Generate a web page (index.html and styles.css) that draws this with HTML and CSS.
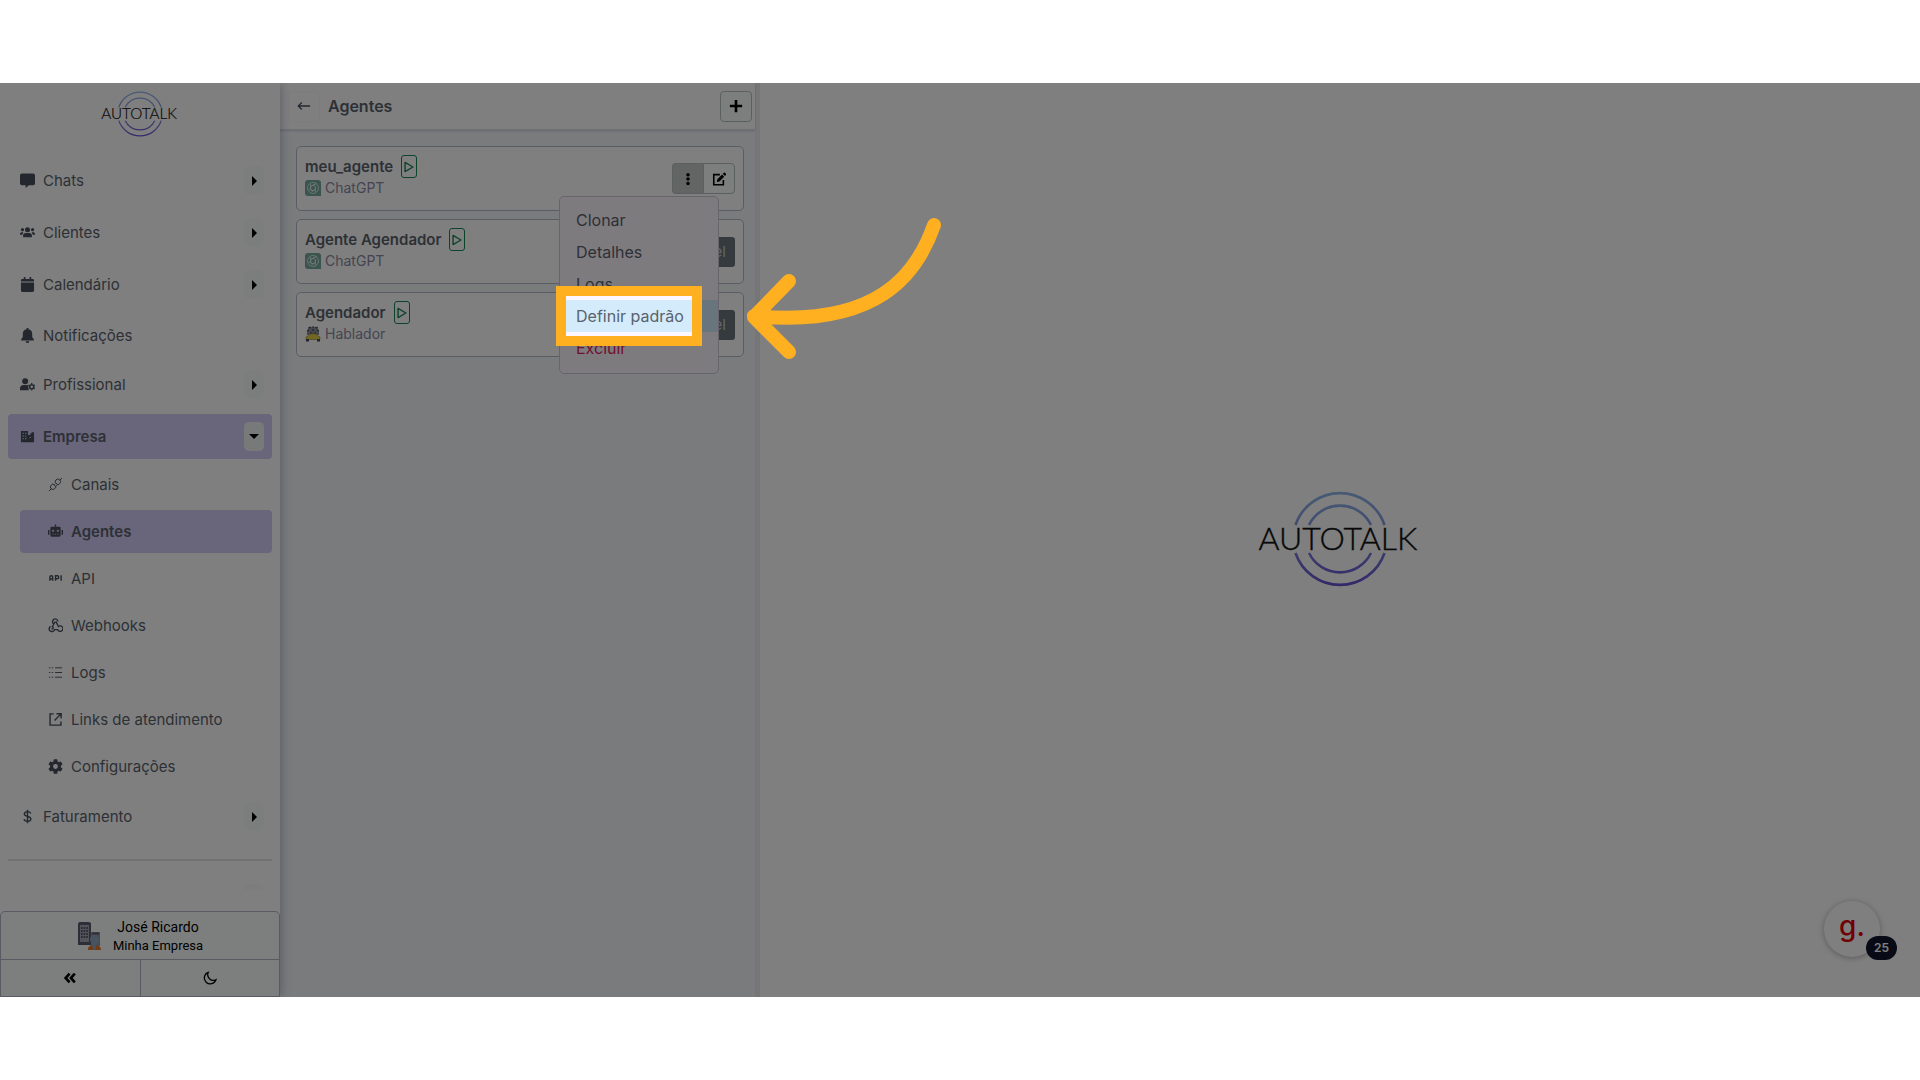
FILE: index.html
```html
<!DOCTYPE html>
<html lang="pt-BR">
<head>
    <meta charset="UTF-8">
    <meta name="viewport" content="width=device-width, initial-scale=1.0">
    <title>Autotalk - Agentes</title>
    <link rel="stylesheet" href="styles.css">
</head>
<body>
    <svg class="sprite" aria-hidden="true">
        <defs>
            <linearGradient id="ring" x1="0" y1="0" x2="0" y2="96" gradientUnits="userSpaceOnUse">
                <stop offset="0" stop-color="#8fb8e8"/>
                <stop offset="0.5" stop-color="#8089dc"/>
                <stop offset="1" stop-color="#6450d2"/>
            </linearGradient>
        </defs>
        <symbol id="logo" viewBox="0 0 168 96">
            <g fill="none" stroke="url(#ring)" stroke-width="2.6">
                <path d="M39.500 34A47 47 0 0 1 128.500 34M53 34A34.500 34.500 0 0 1 115 34"/>
                <path d="M39.500 62A47 47 0 0 0 128.500 62M53 62A34.500 34.500 0 0 0 115 62"/>
            </g>
            <text x="82" y="59" text-anchor="middle" class="logo-text">AUTOTALK</text>
        </symbol>
        <symbol id="openai" viewBox="0 0 16 16">
            <path d="M3 0h10a3 3 0 0 1 3 3v13H3a3 3 0 0 1-3-3V3a3 3 0 0 1 3-3z" fill="#74aa9c"/>
            <g fill="none" stroke="#e6f2ee" stroke-width="0.8">
                <circle cx="8" cy="8" r="5.500"/>
                <path d="M8 5.200l2.400 1.400v2.800L8 10.800 5.600 9.400V6.600zM8 5.200l4-2M10.400 6.600v6M10.400 9.400l-4 2.600M8 10.800L3.500 9M5.600 9.400V4M5.600 6.600L10 4.200"/>
            </g>
        </symbol>
        <symbol id="play" viewBox="0 0 16 16">
            <path d="M3.500 2.800v10.400L12.500 8z" fill="none" stroke="currentColor" stroke-width="1.600" stroke-linejoin="round"/>
        </symbol>
    </svg>

    <div class="app">
        <aside class="sidebar">
            <a href="#" class="brand" aria-label="Autotalk"><svg><use href="#logo"/></svg></a>

            <nav class="menu">
                <div class="menu-item">
                    <a href="#"><svg viewBox="0 0 16 16"><path d="M2 0.500h12a2 2 0 0 1 2 2v8.500a2 2 0 0 1-2 2H9.500L6 16v-3H2a2 2 0 0 1-2-2V2.500a2 2 0 0 1 2-2z"/></svg>Chats</a>
                    <button class="toggle" aria-label="Abrir Chats"></button>
                </div>
                <div class="menu-item">
                    <a href="#"><svg viewBox="0 0 16 16"><circle cx="8" cy="5" r="2.700"/><circle cx="2.600" cy="5" r="1.700"/><circle cx="13.400" cy="5" r="1.700"/><path d="M3.300 13v-1.500a3 3 0 0 1 3-3h3.400a3 3 0 0 1 3 3V13zM0 10.500V9.300a1.700 1.700 0 0 1 1.700-1.700H3.500L2.500 10.500zM16 10.500V9.300a1.700 1.700 0 0 0-1.700-1.700H12.500l1 2.900z"/></svg>Clientes</a>
                    <button class="toggle" aria-label="Abrir Clientes"></button>
                </div>
                <div class="menu-item">
                    <a href="#"><svg viewBox="0 0 16 16"><path d="M4 0h1.800v2h4.400V0H12v2h1.500A1.500 1.500 0 0 1 15 3.500V4.800H1V3.500A1.500 1.500 0 0 1 2.500 2H4zM1 5.800h14v8.700a1.500 1.500 0 0 1-1.500 1.500h-11A1.500 1.500 0 0 1 1 14.500z"/></svg>Calendário</a>
                    <button class="toggle" aria-label="Abrir Calendário"></button>
                </div>
                <div class="menu-item plain">
                    <a href="#"><svg viewBox="0 0 16 16"><path d="M7 0h2v1.200A5 5 0 0 1 13 6v2.500c0 1.500.8 2.500 1.800 3.500v1.200H1.200V12C2.200 11 3 10 3 8.500V6a5 5 0 0 1 4-4.800zM6 14h4a2 2 0 0 1-4 0z"/></svg>Notificações</a>
                </div>
                <div class="menu-item">
                    <a href="#"><svg viewBox="0 0 16 16"><circle cx="5.500" cy="4.500" r="3.200"/><path d="M0 14v-1.500a4 4 0 0 1 4-4h3c.9 0 1.700.2 2.300.7A4 4 0 0 0 9.500 14z"/><circle cx="12.500" cy="10.500" r="2.200" fill="none" stroke="currentColor" stroke-width="1.600"/><path fill="none" stroke="currentColor" stroke-width="1.400" d="M12.500 7.500v-1M12.500 14.500v-1M9.900 9l-.8-.5M15.900 12.500l-.8-.5M9.900 12l-.8.5M15.900 8.500l-.8.5"/></svg>Profissional</a>
                    <button class="toggle" aria-label="Abrir Profissional"></button>
                </div>
                <div class="menu-item active">
                    <a href="#"><svg viewBox="0 0 16 16"><path fill-rule="evenodd" d="M1 2h7.500v4.500H11V4.500h1.500v-1H15V14H1zM2.800 4v1.400h1.200V4zM5.500 4v1.400h1.200V4zM2.800 6.800v1.400h1.200V6.800zM5.500 6.800v1.400h1.200V6.800zM2.800 9.600V11h1.200V9.600zM5.500 9.600V11h1.200V9.600zM10.300 8.500v1.200h1.200V8.500z"/></svg>Empresa</a>
                    <button class="toggle open" aria-label="Fechar Empresa"></button>
                </div>

                <div class="submenu">
                    <a href="#"><svg viewBox="0 0 16 16" class="line"><path d="M1 15l2.500-2.500M12.500 3.500L15 1M7.500 5.500l3 3 2-1.500a2.800 2.800 0 0 0-4-4zM5.300 7.300l3.400 3.400-1.700 1.800a2.600 2.600 0 0 1-3.700-3.700zM6.800 8.200L8 7M8.300 9.700L9.500 8.500"/></svg>Canais</a>
                    <a href="#" class="active"><svg viewBox="0 0 16 16"><path fill-rule="evenodd" d="M7.300 0.500h1.400V3H12a1.500 1.500 0 0 1 1.500 1.500V12a1.500 1.500 0 0 1-1.500 1.500H4A1.500 1.500 0 0 1 2.500 12V4.500A1.500 1.500 0 0 1 4 3h3.300zM5.500 6a1.200 1.200 0 1 0 0 2.400 1.200 1.200 0 0 0 0-2.400zM10.500 6a1.200 1.200 0 1 0 0 2.400 1.200 1.200 0 0 0 0-2.400zM4.800 10.300v1h1.400v-1zM7.300 10.300v1h1.400v-1zM9.800 10.300v1h1.400v-1zM0 6.500h1.500v5H0zM14.500 6.500H16v5h-1.500z"/></svg>Agentes</a>
                    <a href="#"><svg viewBox="0 0 16 16" class="line bold"><path d="M2 10.500V6.500a1.500 1.500 0 0 1 3 0v4M2 8.500h3M8 10.500V5h1.800a1.600 1.600 0 0 1 0 3.300H8M14 4.500v6"/></svg>API</a>
                    <a href="#"><svg viewBox="1 1 22 22" class="line wide"><path d="M4.900 13.400a4 4 0 1 0 5.600 4.600H16M9.600 9.800a4 4 0 1 1 6-3.600M15 17.500a4 4 0 1 0 1.300-4L12.500 6M11.500 6.500L7.500 13.500a1.800 1.800 0 1 1-1.500 3.500"/></svg>Webhooks</a>
                    <a href="#"><svg viewBox="0 0 16 16" class="line"><path d="M1 3h1.500M1 8h1.500M1 13h1.500M4 3h1.500M4 8h1.500M4 13h1.500M7.500 3H15M7.500 8H15M7.500 13H15"/></svg>Logs</a>
                    <a href="#"><svg viewBox="0 0 16 16" class="line bold"><path d="M6 2H2.200v12h11.600V10M9 1.800h5v5M13.800 2L7 9"/></svg>Links de atendimento</a>
                    <a href="#"><svg viewBox="2 2 20 20"><path d="M19.140 12.940c.04-.3.06-.61.06-.94s-.02-.64-.07-.94l2.030-1.580a.49.49 0 0 0 .12-.61l-1.920-3.320a.49.49 0 0 0-.59-.22l-2.390.96a7 7 0 0 0-1.620-.94L14.400 2.810A.48.48 0 0 0 13.920 2.400h-3.840a.48.48 0 0 0-.47.410L9.250 5.350a7 7 0 0 0-1.620.94l-2.390-.96a.48.48 0 0 0-.59.220L2.740 8.870a.48.48 0 0 0 .12.610l2.030 1.580c-.05.3-.09.63-.09.940s.02.640.07.940l-2.030 1.580a.49.49 0 0 0-.12.610l1.920 3.320c.12.220.37.290.59.220l2.390-.96c.5.380 1.030.7 1.620.940l.36 2.540c.05.240.24.410.48.410h3.840c.24 0 .44-.17.470-.41l.36-2.540a7 7 0 0 0 1.620-.94l2.390.96c.22.080.47 0 .59-.22l1.920-3.320a.47.47 0 0 0-.12-.61zM12 15.200a3.200 3.200 0 1 1 0-6.400 3.200 3.200 0 0 1 0 6.400z"/></svg>Configurações</a>
                </div>

                <div class="menu-item">
                    <a href="#"><svg viewBox="0 0 16 16" class="line bold"><path d="M11.500 4.800C11 3.400 9.700 2.800 8 2.800c-2 0-3.400.9-3.400 2.500C4.600 8.700 11.600 7 11.600 10.700c0 1.600-1.500 2.500-3.600 2.500-2 0-3.300-.9-3.700-2.400M8 .8v14.400"/></svg>Faturamento</a>
                    <button class="toggle" aria-label="Abrir Faturamento"></button>
                </div>
                <hr>
                <div class="menu-item">
                    <button class="toggle" aria-label="Abrir mais"></button>
                </div>
            </nav>

            <footer class="account">
                <button class="profile">
                    <svg viewBox="0 0 24 30">
                        <path d="M2 1h10l2 1v22H1V3z" fill="#5b5d70"/>
                        <path d="M3 4h9v17H3z" fill="#a5a8b8"/>
                        <path d="M4 7h7M4 10h7M4 13h7M4 16h7" stroke="#3c3e54" stroke-width="1.600" stroke-dasharray="1.700 0.900"/>
                        <path d="M14 11h9v14h-9z" fill="#9599a6"/>
                        <path d="M15 12.500h7" stroke="#5b5d70" stroke-width="2"/>
                        <path d="M11 29c0-4 2.500-5 6-5s7 1 7 5z" fill="#e87520"/>
                        <path d="M13 18.500c0-3 1.700-4.500 4-4.500s5 1.500 5 4.500c0 2-1.500 3-2 4.500l-2 6h-2l-1-6c-1-1.500-2-2.500-2-4.500z" fill="#8fa7bf"/>
                    </svg>
                    <span>José Ricardo<small>Minha Empresa</small></span>
                </button>
                <div class="account-actions">
                    <button aria-label="Recolher menu"><svg viewBox="0 0 16 16" class="line heavy"><path d="M7.500 3L3 8l4.500 5M13.500 3L9 8l4.500 5"/></svg></button>
                    <button aria-label="Modo escuro"><svg viewBox="0 0 16 16" class="line bold"><path d="M6 1.500A6.800 6.800 0 1 0 14.800 10 6.500 6.500 0 0 1 6 1.500z"/></svg></button>
                </div>
            </footer>
        </aside>

        <section class="panel">
            <header class="panel-header">
                <button class="btn-back" aria-label="Voltar"><svg viewBox="0 0 16 16" class="line bold"><path d="M15 8H1.500M5.500 4l-4 4 4 4"/></svg></button>
                <h1>Agentes</h1>
                <button class="btn-add" aria-label="Adicionar"><svg viewBox="0 0 16 16" class="line heavy"><path d="M8 1v14M1 8h14"/></svg></button>
            </header>

            <div class="agents">
                <article class="card">
                    <div class="card-info">
                        <h2>meu_agente <button class="btn-play" aria-label="Testar meu_agente"><svg><use href="#play"/></svg></button></h2>
                        <p><svg><use href="#openai"/></svg>ChatGPT</p>
                    </div>
                    <div class="btn-group">
                        <button class="pressed" aria-label="Mais opções"><svg viewBox="0 0 16 16"><circle cx="8" cy="3" r="2"/><circle cx="8" cy="8" r="2"/><circle cx="8" cy="13" r="2"/></svg></button>
                        <button aria-label="Editar"><svg viewBox="0 0 16 16"><path d="M9 3H2v11.500h11V9" fill="none" stroke="currentColor" stroke-width="1.800"/><path d="M5.500 11.500l.6-3.200L11.500 2.900l2.400 2.400-5.400 5.500zM12.300 2.100l1.200-1.200a1 1 0 0 1 1.300 0l1.100 1.100a1 1 0 0 1 0 1.300l-1.200 1.200z"/></svg></button>
                    </div>

                    <div class="dropdown">
                        <a href="#">Clonar</a>
                        <a href="#">Detalhes</a>
                        <a href="#">Logs</a>
                        <a href="#" class="hover">Definir padrão
                            <span class="spotlight">
                                <svg class="arrow" viewBox="0 0 200 150"><path d="M186 15C169 64 130 118 6 106M41 71L6 107L41 142"/></svg>
                            </span>
                        </a>
                        <a href="#" class="danger">Excluir</a>
                    </div>
                </article>

                <article class="card">
                    <div class="card-info">
                        <h2>Agente Agendador <button class="btn-play" aria-label="Testar Agente Agendador"><svg><use href="#play"/></svg></button></h2>
                        <p><svg><use href="#openai"/></svg>ChatGPT</p>
                    </div>
                    <button class="btn-status">Disponível</button>
                </article>

                <article class="card">
                    <div class="card-info">
                        <h2>Agendador <button class="btn-play" aria-label="Testar Agendador"><svg><use href="#play"/></svg></button></h2>
                        <p><svg viewBox="0 0 16 16">
                            <path d="M3 1h10v3h1v5H2V4h1z" fill="#8e8e9c"/>
                            <path d="M4 1.500h2M7.500 1h1.500M10.500 1.500h2M2 4.500h2M7 4h2M12 4.500h2M5 7h1.500M9.500 7H11" stroke="#4c4c58" stroke-width="1.300"/>
                            <path d="M1 13.500V11l2-1 1.500-2h7L13 10l2 1v2.500z" fill="#e5cf43" stroke="#8b8648" stroke-width="0.600"/>
                            <path d="M1 13v2.500h3V13M12 13v2.500h3V13" fill="#4a4c58"/>
                        </svg>Hablador</p>
                    </div>
                    <button class="btn-status">Disponível</button>
                </article>
            </div>
        </section>

        <main class="content">
            <svg class="content-logo" role="img" aria-label="Autotalk"><use href="#logo"/></svg>
            <button class="help" aria-label="Ajuda">g.<span class="badge">25</span></button>
        </main>
    </div>
</body>
</html>
```

FILE: styles.css
```css
* {
    margin: 0;
    padding: 0;
    box-sizing: border-box;
}

body {
    font-family: Inter, 'Liberation Sans', sans-serif;
    font-size: 15px;
    color: #5a626c;
    background: #fff;
    height: 100vh;
    padding: 83px 0;
}

a {
    color: inherit;
    text-decoration: none;
}

button {
    font: inherit;
    color: #000;
    background: #f8fffc;
    border: 1px solid #b4bec4;
    cursor: pointer;
}

svg {
    width: 16px;
    height: 16px;
    fill: currentColor;
    flex-shrink: 0;
}

.sprite {
    position: absolute;
    width: 0;
    height: 0;
}

.line {
    fill: none;
    stroke: currentColor;
    stroke-width: 1px;
}

.bold {
    stroke-width: 1.5px;
}

.wide {
    stroke-width: 2px;
}

.heavy {
    stroke-width: 3px;
}

.logo-text {
    font-family: Lato, sans-serif;
    font-size: 32px;
    font-weight: 300;
    fill: #111;
    stroke: #111;
    stroke-width: 0.4px;
}

.app {
    position: relative;
    display: flex;
    height: 100%;
    overflow: hidden;
    background: #fff;
}

/* Menu lateral */
.sidebar {
    position: relative;
    display: flex;
    flex-direction: column;
    width: 280px;
    background: #fff;
    box-shadow: 0 0 10px rgba(60, 60, 110, 0.4);
}

.brand {
    display: flex;
    justify-content: center;
    padding: 8px 0 21px;
}

.brand svg {
    width: 80px;
    height: 46px;
}

.menu {
    flex: 1;
    overflow: hidden;
    padding: 0 8px;
    min-height: 0;
    margin-bottom: 21px;
}

.menu-item {
    display: flex;
    align-items: center;
    justify-content: flex-end;
    height: 45px;
    margin-bottom: 7px;
    padding: 0 8px 0 12px;
    border-radius: 4px;
}

.menu-item a {
    display: flex;
    flex: 1;
    align-items: center;
    gap: 8px;
}

.menu-item.plain {
    height: 43px;
    margin-bottom: 5px;
}

.menu-item svg,
.submenu svg {
    width: 15px;
    height: 15px;
    color: #48505c;
}

.menu .active {
    background: #d2ccf8;
    font-weight: 600;
}

.toggle {
    display: flex;
    align-items: center;
    justify-content: center;
    width: 20px;
    height: 29px;
    background: #f9fdfc;
    border: none;
    border-radius: 5px;
}

.toggle::before {
    content: '';
    border: 5px solid transparent;
    border-left-color: #000;
    border-right-width: 0;
}

.toggle.open {
    background: #f1f5f4;
}

.toggle.open::before {
    border: 5px solid transparent;
    border-top-color: #000;
    border-bottom-width: 0;
}

.submenu {
    display: flex;
    flex-direction: column;
    gap: 4px;
    padding: 0 0 6px 12px;
    margin-top: -3px;
}

.submenu a {
    display: flex;
    align-items: center;
    gap: 8px;
    height: 43px;
    padding-left: 28px;
    border-radius: 4px;
}

hr {
    border: none;
    border-top: 2px solid #e3e3e8;
    margin: 20px 0 15px;
}

.account {
    border: 1px solid #b5b5c4;
    border-radius: 5px 5px 0 0;
    background: #fafffd;
}

.profile {
    display: flex;
    align-items: center;
    justify-content: center;
    gap: 12px;
    width: 100%;
    height: 48px;
    border: none;
    border-bottom: 1px solid #b5b5c4;
    background: none;
    font-family: Roboto, sans-serif;
    font-size: 14px;
    line-height: 20px;
}

.profile svg {
    width: 24px;
    height: 30px;
}

.profile small {
    display: block;
    font-size: 13px;
    line-height: 18px;
}

.account-actions {
    display: flex;
}

.account-actions button {
    flex: 1;
    height: 36px;
    border: none;
    background: none;
}

.account-actions button + button {
    border-left: 1px solid #b5b5c4;
}

.account-actions svg {
    display: block;
    width: 14px;
    height: 14px;
    margin: 0 auto;
}

/* Lista de agentes */
.panel {
    width: 480px;
    background: #f4f6fa;
    border-right: 5px solid #ececf1;
}

.panel-header {
    display: flex;
    align-items: center;
    height: 47px;
    padding: 0 3px 0 8px;
    background: #fff;
    border-bottom: 1px solid #dcdde6;
    box-shadow: 0 1px 2px rgba(60, 60, 130, 0.2);
}

.panel-header h1 {
    flex: 1;
    padding-left: 8px;
    font-size: 16px;
    font-weight: 600;
}

.btn-back,
.btn-add {
    display: flex;
    align-items: center;
    justify-content: center;
    width: 32px;
    height: 31px;
    border-radius: 4px;
}

.btn-back {
    background: none;
    border-color: #f8f8fa;
    color: #48505c;
}

.btn-add svg,
.btn-back svg {
    width: 14px;
    height: 14px;
}

.agents {
    display: flex;
    flex-direction: column;
    gap: 8px;
    padding: 16px 11px 16px 16px;
}

.card {
    position: relative;
    display: flex;
    align-items: center;
    justify-content: space-between;
    height: 65px;
    padding: 0 8px;
    background: #fff;
    border: 1px solid #b4b9c6;
    border-radius: 5px;
}

.card-info {
    padding-bottom: 4px;
}

.card h2 {
    display: flex;
    align-items: center;
    gap: 8px;
    font-size: 15px;
    font-weight: 600;
}

.card p {
    display: flex;
    align-items: center;
    gap: 4px;
    font-size: 14px;
    line-height: 20px;
    color: #8a8aa3;
}

.btn-play {
    display: flex;
    align-items: center;
    justify-content: center;
    width: 16px;
    height: 23px;
    color: #198754;
    background: none;
    border-color: #198754;
    border-radius: 3px;
}

.btn-play svg {
    width: 14px;
    height: 14px;
}

.btn-group {
    display: flex;
}

.btn-group button {
    display: flex;
    align-items: center;
    justify-content: center;
    width: 32px;
    height: 31px;
    border-radius: 0 4px 4px 0;
}

.btn-group .pressed {
    width: 31px;
    border-right: none;
    border-radius: 4px 0 0 4px;
    background: #c6cac8;
}

.btn-group svg {
    width: 14px;
    height: 14px;
}

.btn-status {
    height: 30px;
    padding: 0 9px;
    color: #c8ccd0;
    background: #68747c;
    border: none;
    border-radius: 3px;
}

.dropdown {
    position: absolute;
    top: 49px;
    right: 24px;
    z-index: 10;
    width: 160px;
    padding: 7px 0 9px;
    font-size: 16px;
    line-height: 32px;
    background: #fcf7ff;
    border: 1px solid #cfcbd6;
    border-radius: 5px;
}

.dropdown a {
    position: relative;
    display: block;
    padding: 0 16px;
}

.dropdown .hover {
    z-index: 1;
    background: #d3ebfb;
}

.dropdown .danger {
    color: #e0245e;
}

/* Destaque do passo atual: a sombra escurece o resto da tela */
.spotlight {
    position: absolute;
    top: -14px;
    left: -4px;
    width: 146px;
    height: 60px;
    border: 10px solid #ffb020;
    box-shadow: 0 0 0 3000px rgba(0, 0, 0, 0.5);
}

.arrow {
    position: absolute;
    top: -86px;
    left: 182px;
    width: 200px;
    height: 150px;
    overflow: visible;
    fill: none;
    stroke: #ffb020;
    stroke-width: 14px;
    stroke-linecap: round;
    stroke-linejoin: round;
}

/* Area principal */
.content {
    position: relative;
    display: flex;
    flex: 1;
    align-items: center;
    justify-content: center;
    padding-bottom: 3px;
}

.content-logo {
    width: 168px;
    height: 96px;
}

.help {
    position: absolute;
    right: 40px;
    bottom: 40px;
    width: 56px;
    height: 56px;
    padding-bottom: 6px;
    border: none;
    border-radius: 50%;
    background: #fff;
    box-shadow: 0 1px 6px rgba(0, 0, 0, 0.3);
    color: #e00008;
    font: 500 28px/40px Inter, sans-serif;
}

.badge {
    position: absolute;
    right: -17px;
    bottom: -3px;
    width: 31px;
    border-radius: 12px;
    background: #10162a;
    color: #fff;
    font: 600 12px/24px Inter, sans-serif;
}
```
